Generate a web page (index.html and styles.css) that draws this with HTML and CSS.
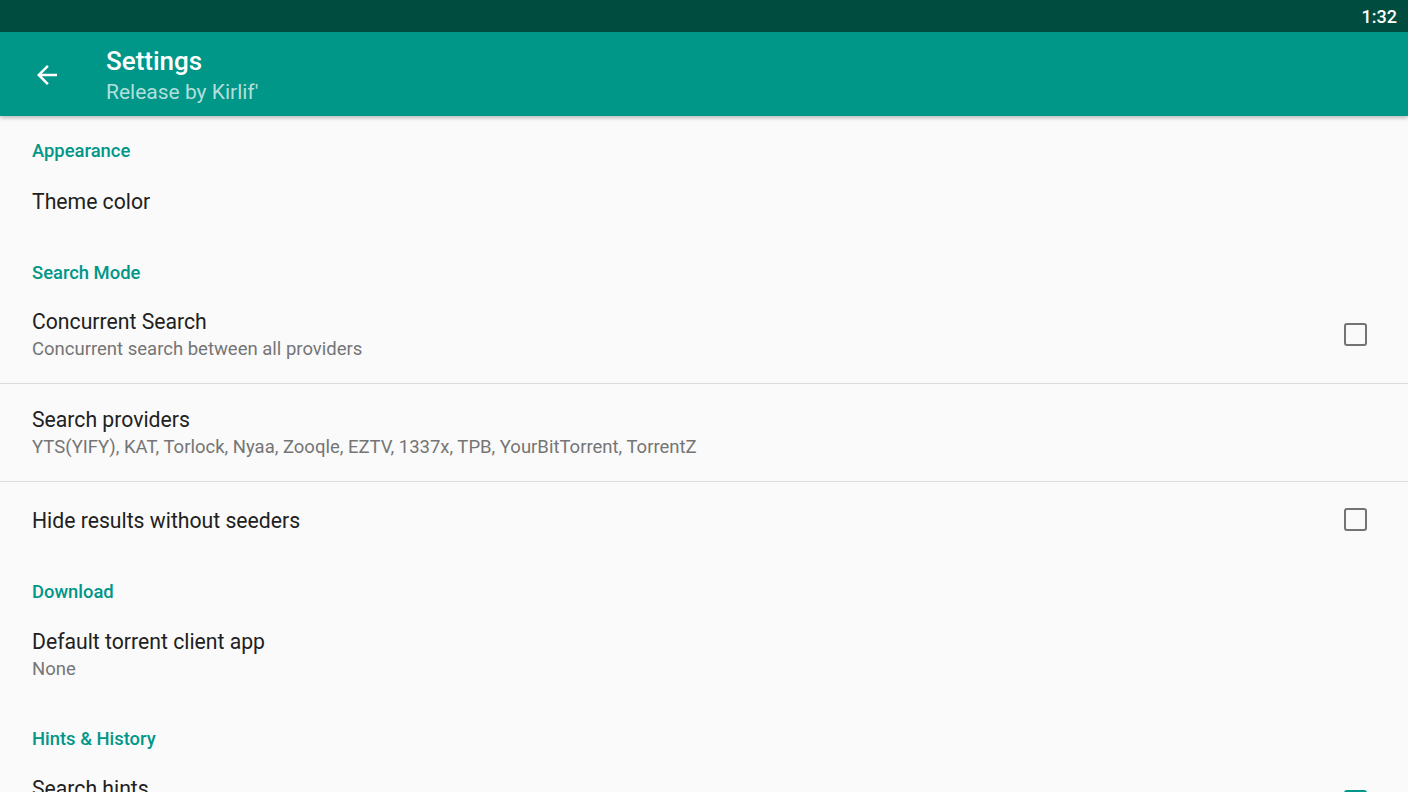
FILE: index.html
```html
<!DOCTYPE html>
<html lang="en">
<head>
  <meta charset="UTF-8" />
  <title>Settings</title>
  <link rel="stylesheet" href="styles.css">
</head>
<body>

  <div class="status-bar">
    <span class="clock">1:32</span>
  </div>

  <div class="toolbar">
    <button class="back" aria-label="Back">
      <svg width="30" height="30" viewBox="0 0 24 24">
        <path fill="#fff" d="M20 11H7.83l5.59-5.59L12 4l-8 8 8 8 1.41-1.41L7.83 13H20v-2z"/>
      </svg>
    </button>
    <div class="titles">
      <div class="title">Settings</div>
      <div class="subtitle">Release by Kirlif'</div>
    </div>
  </div>

  <div class="prefs">
    <div class="category">Appearance</div>
    <div class="pref">
      <div class="pref-text">
        <div class="pref-title">Theme color</div>
      </div>
    </div>

    <div class="category">Search Mode</div>
    <div class="pref two-line divided">
      <div class="pref-text">
        <div class="pref-title">Concurrent Search</div>
        <div class="pref-summary">Concurrent search between all providers</div>
      </div>
      <span class="checkbox"></span>
    </div>
    <div class="pref two-line divided">
      <div class="pref-text">
        <div class="pref-title">Search providers</div>
        <div class="pref-summary">YTS(YIFY), KAT, Torlock, Nyaa, Zooqle, EZTV, 1337x, TPB, YourBitTorrent, TorrentZ</div>
      </div>
    </div>
    <div class="pref tall">
      <div class="pref-text">
        <div class="pref-title">Hide results without seeders</div>
      </div>
      <span class="checkbox"></span>
    </div>

    <div class="category">Download</div>
    <div class="pref two-line">
      <div class="pref-text">
        <div class="pref-title">Default torrent client app</div>
        <div class="pref-summary">None</div>
      </div>
    </div>

    <div class="category">Hints &amp; History</div>
    <div class="pref two-line">
      <div class="pref-text">
        <div class="pref-title">Search hints</div>
        <div class="pref-summary">Show hints while typing</div>
      </div>
      <span class="checkbox checked">
        <svg width="18" height="18" viewBox="0 0 24 24">
          <path fill="none" stroke="#fff" stroke-width="3" d="M5 12.5l4.5 4.5L19 7.5"/>
        </svg>
      </span>
    </div>
  </div>

</body>
</html>
```

FILE: styles.css
```css
body {
  margin: 0;
  width: 1408px;
  height: 792px;
  overflow: hidden;
  background-color: #fafafa;
  font-family: Roboto, "Noto Sans", sans-serif;
  color: #212121;
}
.status-bar {
  height: 32px;
  background-color: #004d40;
  display: flex;
  justify-content: flex-end;
  align-items: center;
  padding-right: 11px;
}
.clock {
  color: #fff;
  font-size: 18px;
  font-weight: 500;
}
.toolbar {
  height: 84px;
  background-color: #009688;
  display: flex;
  align-items: center;
  box-shadow: 0 2px 4px rgba(0, 0, 0, 0.25);
  position: relative;
  z-index: 1;
}
.back {
  background: none;
  border: none;
  padding: 0;
  margin-left: 32px;
  width: 30px;
  height: 30px;
  display: flex;
  margin-top: 2px;
}
.titles {
  margin-left: 44px;
  margin-top: 6px;
}
.title {
  color: #fff;
  font-size: 26px;
  font-weight: 500;
  line-height: 30px;
}
.subtitle {
  color: #b2dfdb;
  font-size: 21px;
  line-height: 33px;
}
.category {
  height: 48px;
  box-sizing: border-box;
  padding: 24px 32px 0;
  line-height: 22px;
  font-size: 18.4px;
  font-weight: 500;
  color: #009688;
}
.pref {
  height: 74px;
  box-sizing: border-box;
  display: flex;
  align-items: center;
  padding: 0 41px 0 32px;
}
.pref.tall {
  height: 75px;
}
.pref.two-line {
  height: 99px;
}
.pref.divided {
  height: 98px;
  border-bottom: 1px solid #dcdcdc;
}
.pref-text {
  flex: 1;
  padding-top: 2px;
}
.pref-title {
  font-size: 21.2px;
  line-height: 26px;
}
.pref-summary {
  font-size: 18.5px;
  line-height: 28px;
  color: #757575;
}
.checkbox {
  width: 19px;
  height: 19px;
  border: 2.5px solid #737373;
  border-radius: 3px;
  display: flex;
  align-items: center;
  justify-content: center;
}
.checkbox.checked {
  background-color: #009688;
  border-color: #009688;
}
```
